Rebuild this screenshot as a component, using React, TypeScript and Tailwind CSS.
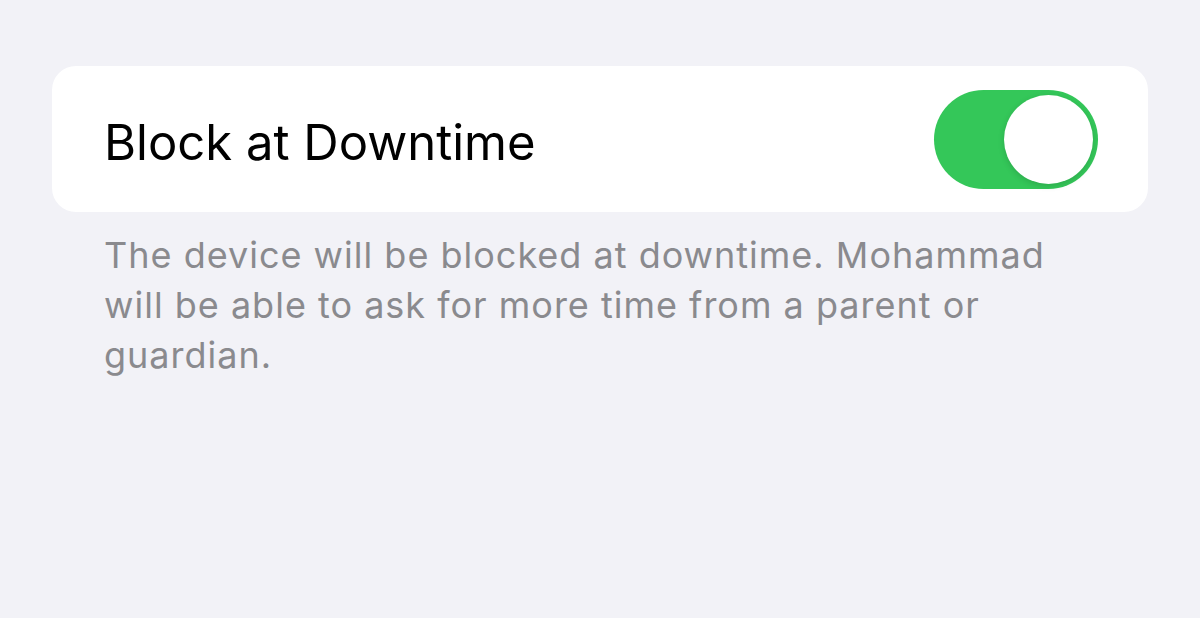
export default function App() {
  return (
    <div className="min-h-[618px] w-[1200px] bg-[#f2f2f7] pt-[66px] px-[52px] font-['Inter',sans-serif]">
      <div className="flex h-[146px] items-center justify-between rounded-[24px] bg-white pl-[52px] pr-[50px]">
        <span className="mt-[6px] text-[49px] leading-none text-black">Block at Downtime</span>
        <Toggle on />
      </div>
      <p className="mt-[18px] w-[1022px] pl-[52px] text-[36px] leading-[50px] tracking-[1px] text-[#8a8a8e]">
        The device will be blocked at downtime. Mohammad will be able to ask for more time from a parent or
        guardian.
      </p>
    </div>
  );
}

function Toggle({ on }: { on: boolean }) {
  return (
    <div
      className={`flex h-[99px] w-[164px] items-center rounded-full p-[5px] ${
        on ? "justify-end bg-[#34c759]" : "justify-start bg-[#e9e9ea]"
      }`}
    >
      <div className="h-[89px] w-[89px] rounded-full bg-white shadow-[0_2px_6px_rgba(0,0,0,0.15)]" />
    </div>
  );
}
